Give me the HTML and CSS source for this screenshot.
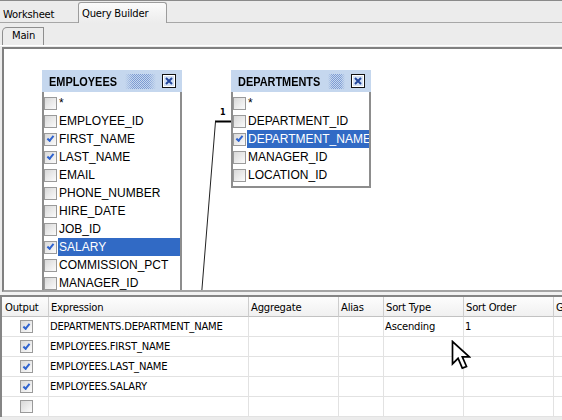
FILE: index.html
```html
<!DOCTYPE html>
<html lang="en">
<head>
  <meta charset="UTF-8" />
  <title>Query Builder</title>
  <link rel="stylesheet" href="styles.css">
</head>
<body>

  <div class="tabs">
    <div class="tab">Worksheet</div>
    <div class="tab tab-active">Query Builder</div>
  </div>

  <div class="subtabs">
    <div class="subtab">Main</div>
  </div>

  <div class="canvas">
    <!-- join line between the two tables -->
    <svg class="join" width="600" height="241">
      <path d="M211 72.5H227" stroke="#000" stroke-width="2" fill="none"/>
      <path d="M211.5 72.5L197.8 242" stroke="#222" stroke-width="1" fill="none"/>
    </svg>
    <span class="join-label">1</span>

    <div class="table table-emp">
      <div class="table-head">
        <span class="table-title">EMPLOYEES</span>
        <span class="grip"></span>
        <svg class="close" width="14" height="14" viewBox="0 0 14 14">
          <rect x=".5" y=".5" width="13" height="13" fill="#d3e1f5" stroke="#111"/>
          <rect x="1.5" y="1.5" width="11" height="11" fill="none" stroke="#fff"/>
          <path d="M4 4l6 6M10 4l-6 6" stroke="#24479c" stroke-width="2"/>
        </svg>
      </div>
      <div class="table-list">
        <div class="col"><span class="cb"></span><span class="col-name">*</span></div>
        <div class="col"><span class="cb"></span><span class="col-name">EMPLOYEE_ID</span></div>
        <div class="col"><span class="cb on"></span><span class="col-name">FIRST_NAME</span></div>
        <div class="col"><span class="cb on"></span><span class="col-name">LAST_NAME</span></div>
        <div class="col"><span class="cb"></span><span class="col-name">EMAIL</span></div>
        <div class="col"><span class="cb"></span><span class="col-name">PHONE_NUMBER</span></div>
        <div class="col"><span class="cb"></span><span class="col-name">HIRE_DATE</span></div>
        <div class="col"><span class="cb"></span><span class="col-name">JOB_ID</span></div>
        <div class="col"><span class="cb on"></span><span class="col-name selected">SALARY</span></div>
        <div class="col"><span class="cb"></span><span class="col-name">COMMISSION_PCT</span></div>
        <div class="col"><span class="cb"></span><span class="col-name">MANAGER_ID</span></div>
        <div class="col"><span class="cb"></span><span class="col-name">DEPARTMENT_ID</span></div>
      </div>
    </div>

    <div class="table table-dept">
      <div class="table-head">
        <span class="table-title">DEPARTMENTS</span>
        <span class="grip"></span>
        <svg class="close" width="14" height="14" viewBox="0 0 14 14">
          <rect x=".5" y=".5" width="13" height="13" fill="#d3e1f5" stroke="#111"/>
          <rect x="1.5" y="1.5" width="11" height="11" fill="none" stroke="#fff"/>
          <path d="M4 4l6 6M10 4l-6 6" stroke="#24479c" stroke-width="2"/>
        </svg>
      </div>
      <div class="table-list">
        <div class="col"><span class="cb"></span><span class="col-name">*</span></div>
        <div class="col"><span class="cb"></span><span class="col-name">DEPARTMENT_ID</span></div>
        <div class="col"><span class="cb on"></span><span class="col-name selected">DEPARTMENT_NAME</span></div>
        <div class="col"><span class="cb"></span><span class="col-name">MANAGER_ID</span></div>
        <div class="col"><span class="cb"></span><span class="col-name">LOCATION_ID</span></div>
      </div>
    </div>
  </div>

  <div class="splitter"></div>

  <div class="grid">
    <div class="grid-row grid-head">
      <div class="cell cell-first">Output</div>
      <div class="cell">Expression</div>
      <div class="cell">Aggregate</div>
      <div class="cell">Alias</div>
      <div class="cell">Sort Type</div>
      <div class="cell">Sort Order</div>
      <div class="cell">G</div>
    </div>
    <div class="grid-row">
      <div class="cell cell-out"><span class="cb on"></span></div>
      <div class="cell">DEPARTMENTS.DEPARTMENT_NAME</div>
      <div class="cell"></div>
      <div class="cell"></div>
      <div class="cell">Ascending</div>
      <div class="cell">1</div>
      <div class="cell"></div>
    </div>
    <div class="grid-row">
      <div class="cell cell-out"><span class="cb on"></span></div>
      <div class="cell">EMPLOYEES.FIRST_NAME</div>
      <div class="cell"></div>
      <div class="cell"></div>
      <div class="cell"></div>
      <div class="cell"></div>
      <div class="cell"></div>
    </div>
    <div class="grid-row">
      <div class="cell cell-out"><span class="cb on"></span></div>
      <div class="cell">EMPLOYEES.LAST_NAME</div>
      <div class="cell"></div>
      <div class="cell"></div>
      <div class="cell"></div>
      <div class="cell"></div>
      <div class="cell"></div>
    </div>
    <div class="grid-row">
      <div class="cell cell-out"><span class="cb on"></span></div>
      <div class="cell">EMPLOYEES.SALARY</div>
      <div class="cell"></div>
      <div class="cell"></div>
      <div class="cell"></div>
      <div class="cell"></div>
      <div class="cell"></div>
    </div>
    <div class="grid-row">
      <div class="cell cell-out"><span class="cb"></span></div>
      <div class="cell"></div>
      <div class="cell"></div>
      <div class="cell"></div>
      <div class="cell"></div>
      <div class="cell"></div>
      <div class="cell"></div>
    </div>
  </div>

  <!-- mouse pointer -->
  <svg class="cursor" width="20" height="30" viewBox="-1.5 -1.5 20 30">
    <path d="M0 0V22.4L5.6 16.8L9.8 26.6L14 25L9.8 15.4H16.8Z" fill="#fff" stroke="#000" stroke-width="1.7"/>
  </svg>

</body>
</html>
```

FILE: styles.css
```css
body {
  margin: 0;
  width: 562px;
  height: 420px;
  position: relative;
  overflow: hidden;
  background: #ececec;
  font-family: "DejaVu Sans", sans-serif;
  font-size: 10px;
  letter-spacing: -0.2px;
  color: #000;
}

/* top tabs */
.tabs {
  display: flex;
  align-items: flex-end;
  height: 21px;
  border-top: 1px solid #8a8a8a;
  border-bottom: 1px solid #a7a7a7;
}

.tab {
  box-sizing: border-box;
  width: 78px;
  height: 21px;
  padding: 7px 0 0 3px;
  line-height: 14px;
}

.tab-active {
  width: 89px;
  margin-bottom: -1px;
  padding-top: 4px;
  border: 1px solid #9c9c9c;
  border-bottom: 0;
  border-radius: 3px 3px 0 0;
  background: linear-gradient(#fbfbfb, #ececec);
}

.subtabs {
  display: flex;
  align-items: flex-end;
  height: 22px;
  padding-left: 2px;
  border-bottom: 1px solid #fff;
}

.subtab {
  box-sizing: border-box;
  width: 42px;
  height: 18px;
  padding: 1px 0 0 9px;
  line-height: 14px;
  border: 1px solid #8e8e8e;
  border-bottom: 0;
  border-top-left-radius: 5px;
  background: #ececec;
}

/* diagram */
.canvas {
  position: relative;
  height: 241px;
  margin: 1px 0 0 2px;
  border-top: 2px solid #808080;
  border-left: 2px solid #808080;
  border-bottom: 2px solid #a4a4a4;
  background: #fff;
  overflow: hidden;
}

.join {
  position: absolute;
  left: 0;
  top: 0;
}

.join-label {
  position: absolute;
  left: 216px;
  top: 60px;
  font-size: 8px;
  font-weight: bold;
  line-height: 8px;
  letter-spacing: 0;
}

.table {
  position: absolute;
  top: 21px;
  width: 140px;
}

.table-emp { left: 38px; }
.table-dept { left: 227px; }

.table-head {
  display: flex;
  align-items: center;
  height: 22px;
  padding: 0 6px 0 7px;
  background: #c5d7ee;
}

/* narrow bold title: squeeze the regular bold face */
.table-title {
  display: inline-block;
  font-family: "Liberation Sans", Arial, sans-serif;
  font-weight: bold;
  font-size: 13px;
  letter-spacing: 0;
  transform: scaleX(0.84);
  transform-origin: 0 50%;
}

.table-emp .table-title { margin-right: -13px; }
.table-dept .table-title { margin-right: -16px; }

.grip {
  flex: 1;
  height: 15px;
  margin: 0 6px 0 8px;
  background: repeating-conic-gradient(#7d9bd3 0 25%, transparent 0 50%) 0 0 / 2px 2px;
  -webkit-mask-image: linear-gradient(90deg, transparent, #000 25%, #000 75%, transparent);
  mask-image: linear-gradient(90deg, transparent, #000 25%, #000 75%, transparent);
}

.close {
  flex: none;
  display: block;
}

.table-list {
  padding: 2px 0;
  border: 2px solid #8d8d8d;
  border-top: 0;
  background: #fff;
}

.col {
  display: flex;
  align-items: center;
  height: 18px;
}

.col-name {
  flex: 1;
  height: 18px;
  margin-left: 1px;
  padding-left: 1px;
  line-height: 18px;
  font-family: "Liberation Sans", Arial, sans-serif;
  font-size: 12px;
  letter-spacing: 0;
  white-space: nowrap;
  overflow: hidden;
}

.col-name.selected {
  background: #316ac5;
  color: #fff;
}

/* checkbox */
.cb {
  box-sizing: border-box;
  flex: none;
  display: flex;
  align-items: center;
  justify-content: center;
  width: 13px;
  height: 13px;
  border: 1px solid #9a9a9a;
  background: linear-gradient(135deg, #d8d8d8, #fbfbfb);
}

.cb.on::after {
  content: "";
  width: 5px;
  height: 2px;
  margin-top: -2px;
  border-left: 2px solid #2f63cf;
  border-bottom: 2px solid #2f63cf;
  transform: rotate(-50deg);
}

/* output grid */
.splitter {
  height: 3px;
  background: #f2f2f2;
}

.grid {
  border-top: 2px solid #858585;
  border-left: 2px solid #858585;
}

.grid-row {
  display: grid;
  grid-template-columns: 47px 200px 90px 45px 80px 90px 90px;
}

.cell {
  box-sizing: border-box;
  height: 20px;
  padding-left: 1px;
  line-height: 19px;
  white-space: nowrap;
  border-right: 1px solid #e2e2e2;
  border-bottom: 1px solid #e2e2e2;
  background: #fff;
}

.grid-head .cell {
  padding: 3px 0 0 2px;
  line-height: 16px;
  border-right-color: #cdcdcd;
  border-bottom-color: #c2c2c2;
  background: linear-gradient(#fdfdfd, #f0f0f0);
}

.grid-head .cell-first {
  padding-left: 3px;
}

.cell-out {
  display: flex;
  align-items: center;
  justify-content: center;
  padding-left: 2px;
}

.cursor {
  position: absolute;
  left: 451px;
  top: 340px;
}
```
